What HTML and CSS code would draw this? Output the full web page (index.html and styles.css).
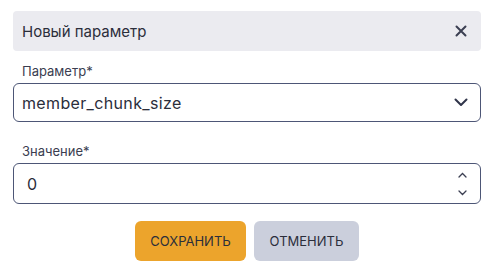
FILE: index.html
```html
<!DOCTYPE html>
<html lang="ru">
<head>
    <meta charset="UTF-8">
    <title>Новый параметр</title>
    <link rel="stylesheet" href="styles.css">
</head>
<body>
    <div class="modal">
        <header class="modal-header">
            <span class="modal-title">Новый параметр</span>
            <button class="close-btn" title="Закрыть">
                <svg width="12" height="12" viewBox="0 0 12 12"><path d="M1.5 1.5 L10.5 10.5 M10.5 1.5 L1.5 10.5" stroke="#3b3f52" stroke-width="2" stroke-linecap="round"/></svg>
            </button>
        </header>

        <div class="field">
            <label class="field-label">Параметр*</label>
            <div class="field-box select-box">
                <span class="field-value">member_chunk_size</span>
                <svg class="chevron" width="14" height="9" viewBox="0 0 14 9"><path d="M1.5 1.5 L7 7 L12.5 1.5" fill="none" stroke="#30354a" stroke-width="2" stroke-linecap="round" stroke-linejoin="round"/></svg>
            </div>
        </div>

        <div class="field field-second">
            <label class="field-label">Значение*</label>
            <div class="field-box number-box">
                <span class="field-value">0</span>
                <div class="spinner">
                    <svg width="9" height="6" viewBox="0 0 9 6"><path d="M1 5 L4.5 1.5 L8 5" fill="none" stroke="#3b3f52" stroke-width="1.3" stroke-linecap="round"/></svg>
                    <svg width="9" height="6" viewBox="0 0 9 6"><path d="M1 1 L4.5 4.5 L8 1" fill="none" stroke="#3b3f52" stroke-width="1.3" stroke-linecap="round"/></svg>
                </div>
            </div>
        </div>

        <div class="actions">
            <button class="btn btn-save">СОХРАНИТЬ</button>
            <button class="btn btn-cancel">ОТМЕНИТЬ</button>
        </div>
    </div>
</body>
</html>
```

FILE: styles.css
```css
body {
    margin: 0;
    font-family: "Inter", "Noto Sans", sans-serif;
    color: #2b2e3b;
    background: #fff;
}

.modal {
    width: 468px;
    padding: 11px 12px 0 13px;
}

.modal-header {
    height: 40px;
    background-color: #ebebf0;
    border-radius: 4px;
    display: flex;
    justify-content: space-between;
    align-items: center;
    padding: 0 14px 0 9px;
}

.modal-title {
    font-size: 15px;
}

.close-btn {
    border: none;
    background: none;
    padding: 0;
    display: flex;
    cursor: pointer;
}

.field {
    margin-top: 12px;
}

.field-second {
    margin-top: 21px;
}

.field-label {
    display: block;
    font-size: 13px;
    line-height: 16px;
    margin: 0 0 4px 9px;
    color: #3a3d50;
}

.field-box {
    box-sizing: border-box;
    border: 1px solid #4d5676;
    border-radius: 6px;
    display: flex;
    align-items: center;
    justify-content: space-between;
}

.select-box {
    height: 39px;
    padding: 0 12px 0 8px;
}

.field-value {
    font-size: 16px;
    letter-spacing: 0.35px;
}

.number-box {
    height: 41px;
    padding: 0 13px 0 13px;
}

.spinner {
    display: flex;
    flex-direction: column;
    gap: 12px;
}

.actions {
    display: flex;
    justify-content: center;
    gap: 8px;
    margin-top: 17px;
}

.btn {
    height: 40px;
    border: none;
    border-radius: 6px;
    font-family: inherit;
    font-size: 13px;
    color: #2b2e3b;
    cursor: pointer;
}

.btn-save {
    width: 111px;
    background-color: #eca42c;
}

.btn-cancel {
    width: 105px;
    background-color: #cbcfdc;
}
```
